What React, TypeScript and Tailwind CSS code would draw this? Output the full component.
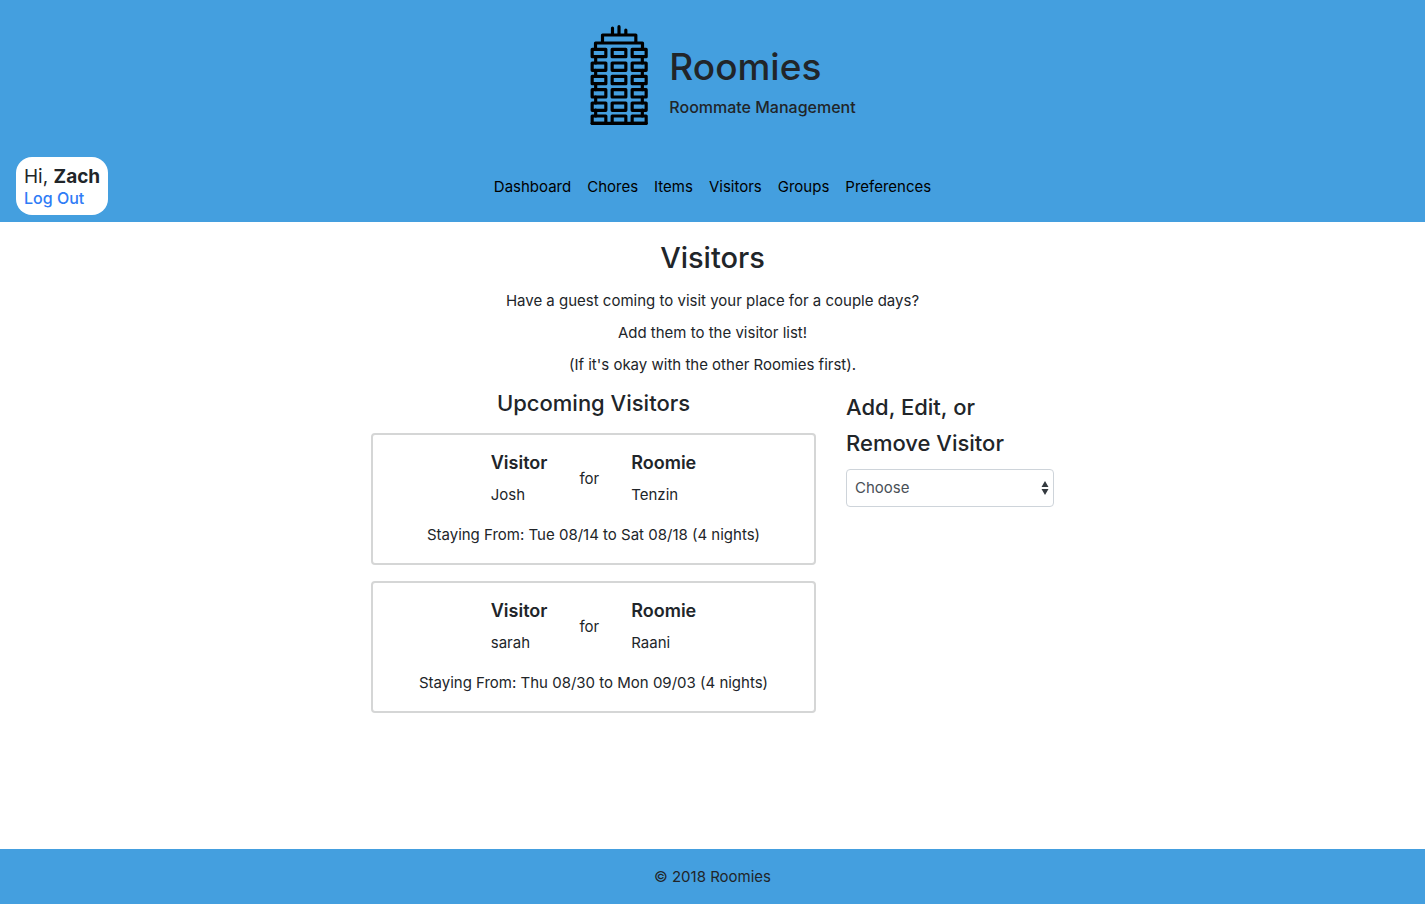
type Visit = {
  visitor: string;
  roomie: string;
  stay: string;
};

const visits: Visit[] = [
  { visitor: "Josh", roomie: "Tenzin", stay: "Tue 08/14 to Sat 08/18 (4 nights)" },
  { visitor: "sarah", roomie: "Raani", stay: "Thu 08/30 to Mon 09/03 (4 nights)" },
];

const links = ["Dashboard", "Chores", "Items", "Visitors", "Groups", "Preferences"];

const floors = [103, 144, 184, 224, 264, 303];

function Building() {
  return (
    <svg
      viewBox="-33 30 300 300"
      className="size-[100px] shrink-0"
      fill="none"
      stroke="#000"
      strokeWidth="9.500"
      strokeLinecap="round"
      strokeLinejoin="round"
      aria-hidden="true"
    >
      <path d="M97.500 39V58M117 35V58M137.500 45V58" />
      <path d="M67.500 84V60H167.500V84M46.500 102V84H187.500V102" />
      {floors.map((y) => (
        <path key={y} d={`M36.500 ${y}H77.500V${y + 22}H36.500ZM96.500 ${y}H137.500V${y + 22}H96.500ZM156.500 ${y}H198.500V${y + 22}H156.500Z`} />
      ))}
      {floors.slice(1).map((y) => (
        <path key={y} d={`M47 ${y - 18}V${y}M187 ${y - 18}V${y}`} />
      ))}
      <path d="M36.500 325H198.500" />
    </svg>
  );
}

function Person({ role, name }: { role: string; name: string }) {
  return (
    <div>
      <h4 className="text-lg leading-6 font-semibold">{role}</h4>
      <p className="mt-2 leading-6">{name}</p>
    </div>
  );
}

function VisitCard({ visit }: { visit: Visit }) {
  return (
    <article className="rounded border-2 border-[#d5d6d6] p-4">
      <div className="flex items-center justify-center gap-8">
        <Person role="Visitor" name={visit.visitor} />
        <p className="leading-6">for</p>
        <Person role="Roomie" name={visit.roomie} />
      </div>
      <p className="mt-4 text-center leading-6">Staying From: {visit.stay}</p>
    </article>
  );
}

export default function App() {
  return (
    <div className="flex min-h-screen flex-col bg-white font-['Inter','Liberation_Sans',sans-serif] text-[15px] leading-6 text-[#212529]">
      <header className="bg-[#449fdf] pt-[25px] pb-[7px]">
        <div className="flex items-center justify-center">
          <Building />
          <div className="pt-3">
            <h1 className="text-[37px] leading-12 font-medium">Roomies</h1>
            <p className="mt-1 text-base leading-6 font-medium">Roommate Management</p>
          </div>
        </div>
        <div className="mt-8 grid grid-cols-[1fr_auto_1fr] items-center px-4">
          <div className="justify-self-start rounded-2xl bg-white p-2">
            <p className="text-[19px] leading-6">
              Hi, <strong className="font-bold">Zach</strong>
            </p>
            <button type="button" className="block text-base leading-[18px] font-medium text-[#2f7cf6]">
              Log Out
            </button>
          </div>
          <nav className="flex gap-4 pt-0.5 text-black">
            {links.map((link) => (
              <a key={link} href={`#${link.toLowerCase()}`}>
                {link}
              </a>
            ))}
          </nav>
        </div>
      </header>

      <main className="mx-auto w-full max-w-[683px] grow">
        <div className="pt-[18px] text-center">
          <h2 className="text-[29px] leading-9 font-medium">Visitors</h2>
          <div className="mt-[13px] space-y-2">
            <p>Have a guest coming to visit your place for a couple days?</p>
            <p>Add them to the visitor list!</p>
            <p>(If it's okay with the other Roomies first).</p>
          </div>
        </div>
        <div className="mt-1 grid grid-cols-[445fr_208fr] gap-[30px]">
          <section>
            <h3 className="mt-1 text-center text-[22px] leading-9 font-medium">Upcoming Visitors</h3>
            <div className="mt-3 space-y-4">
              {visits.map((visit) => (
                <VisitCard key={visit.visitor} visit={visit} />
              ))}
            </div>
          </section>
          <section>
            <label htmlFor="action" className="mt-2 block text-[22px] leading-9 font-medium">
              Add, Edit, or Remove Visitor
            </label>
            <div className="relative mt-2">
              <select
                id="action"
                className="h-[38px] w-full appearance-none rounded border border-[#ced4da] bg-white px-2 text-[#495057]"
              >
                <option>Choose</option>
                <option>Add</option>
                <option>Edit</option>
                <option>Remove</option>
              </select>
              <svg
                viewBox="0 0 8 14"
                className="pointer-events-none absolute top-3 right-[5px] h-3.5 w-2"
                fill="#343a40"
                aria-hidden="true"
              >
                <path d="M4 0L7.500 6H.500ZM4 14L.500 8H7.500Z" />
              </svg>
            </div>
          </section>
        </div>
      </main>

      <footer className="bg-[#449fdf] pt-4 pb-[15px] text-center">© 2018 Roomies</footer>
    </div>
  );
}
